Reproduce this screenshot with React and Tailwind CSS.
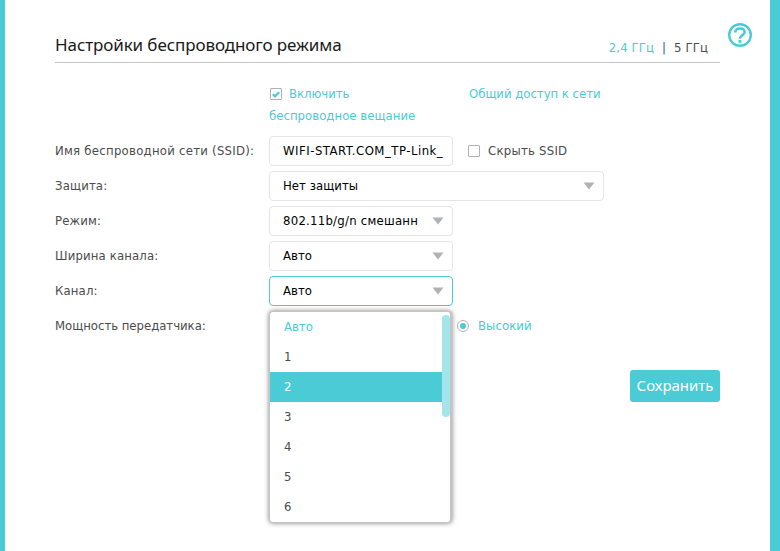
import React, { useState } from 'react';

const channels = ['Авто', '1', '2', '3', '4', '5', '6'];

const Arrow = () => (
  <svg width="12" height="8" viewBox="0 0 12 8" className="shrink-0">
    <path d="M0.5 0.5h11L6 7.5z" fill="#b0b2b5" />
  </svg>
);

const Checkbox = ({ checked }) => (
  <span className="flex h-3 w-3 shrink-0 items-center justify-center rounded-[1px] border border-[#b0b2b5] bg-white">
    {checked && (
      <svg width="8" height="7" viewBox="0 0 8 7">
        <path d="M0.8 3.2L3 5.4L7.2 1.2" fill="none" stroke="#4acbd6" strokeWidth="2.2" />
      </svg>
    )}
  </span>
);

const Select = ({ value, width = 'w-[184px]', active, onClick, tracking = 'tracking-[0.05px]' }) => (
  <button
    type="button"
    onClick={onClick}
    className={`flex h-[30px] ${width} items-center justify-between rounded-[4px] border bg-white pr-[8px] pl-[13px] text-black ${
      active ? 'border-[#4acbd6]' : 'border-[#e5e5e5]'
    }`}
  >
    <span className={`text-left whitespace-nowrap ${tracking}`}>{value}</span>
    <Arrow />
  </button>
);

const Row = ({ label, children, tracking = 'tracking-[0.15px]' }) => (
  <div className="mb-[5px] flex h-[30px] items-center">
    <div className={`w-[214px] shrink-0 whitespace-nowrap ${tracking}`}>{label}</div>
    {children}
  </div>
);

// Channel list that opens under its select
const ChannelMenu = ({ selected, hovered, onSelect }) => (
  <div className="absolute top-[35px] left-0 z-10 h-[212px] w-[183px] overflow-hidden rounded-[4px] border border-r-2 border-[#c4c4c4] bg-white shadow-[0_0_5px_rgba(0,0,0,0.5)]">
    <ul>
      {channels.map((item) => (
        <li
          key={item}
          onClick={() => onSelect(item)}
          className={`flex h-[30px] items-center pl-[14px] ${
            item === hovered
              ? 'bg-[#4acbd6] text-white'
              : item === selected
                ? 'text-[#4acbd6]'
                : ''
          }`}
        >
          {item}
        </li>
      ))}
    </ul>
    <div className="absolute top-[3px] right-0 h-[102px] w-[8px] rounded-full bg-[#a4e5eb]" />
  </div>
);

const App = () => {
  const [channel, setChannel] = useState('Авто');
  const [open, setOpen] = useState(true);

  return (
    <div className="h-[551px] w-[780px] overflow-hidden border-r-[10px] border-l-[5px] border-[#4acbd6] bg-white font-['DejaVu_Sans_Condensed','DejaVu_Sans',sans-serif] text-[13px] leading-[22px] tracking-[-0.02px] text-[#4c4c4c] [font-stretch:condensed]">
      <div className="flex pt-[22px] pl-[50px]">
        <main className="w-[665px]">
          {/* Header */}
          <header className="flex h-[41px] items-center justify-between border-b border-[#c6c6c6]">
            <h1 className="pt-[6px] font-['Noto_Sans',sans-serif] text-[17px] tracking-[-0.1px] text-[#1a1a1a] [font-stretch:normal]">
              Настройки беспроводного режима
            </h1>
            <div className="flex gap-[8px] pt-[11px] pr-[12px] tracking-[0.1px]">
              <span className="text-[#4acbd6]">2,4 ГГц</span>
              <span className="text-[#29589b]">|</span>
              <span>5 ГГц</span>
            </div>
          </header>

          {/* Wireless radio */}
          <div className="mt-[20px] mb-[10px] flex h-[43px] pl-[214px] text-[#4acbd6]">
            <label className="w-[200px]">
              <span className="flex items-center gap-[7px] pl-[1px]">
                <Checkbox checked />
                Включить
              </span>
              <span className="block tracking-[0.03px]">беспроводное вещание</span>
            </label>
            <span>Общий доступ к сети</span>
          </div>

          <Row label="Имя беспроводной сети (SSID):" tracking="tracking-[0.26px]">
            <div className="flex h-[30px] w-[184px] items-center rounded-[4px] border border-[#e5e5e5] px-[13px] text-black">
              <span className="tracking-[0.5px] whitespace-nowrap">WIFI-START.COM_TP-Link_</span>
            </div>
            <label className="ml-[15px] flex items-center gap-[8px] tracking-[0.25px]">
              <Checkbox />
              Скрыть SSID
            </label>
          </Row>
          <Row label="Защита:">
            <Select value="Нет защиты" width="w-[335px]" />
          </Row>
          <Row label="Режим:">
            <Select value="802.11b/g/n смешанн" tracking="tracking-[0.25px]" />
          </Row>
          <Row label="Ширина канала:">
            <Select value="Авто" />
          </Row>
          <Row label="Канал:">
            <div className="relative">
              <Select value={channel} active onClick={() => setOpen(!open)} />
              {open && <ChannelMenu selected={channel} hovered="2" onSelect={setChannel} />}
            </div>
          </Row>
          <Row label="Мощность передатчика:" tracking="tracking-[-0.02px]">
            <label className="ml-[188px] flex items-center gap-[9px] tracking-[0.08px] text-[#4acbd6]">
              <span className="flex h-3 w-3 items-center justify-center rounded-full border border-[#b0b2b5]">
                <span className="h-1.5 w-1.5 rounded-full bg-[#4acbd6]" />
              </span>
              Высокий
            </label>
          </Row>

          <div className="mt-[29px] flex justify-end">
            <button
              type="button"
              className="h-8 w-[90px] rounded-[3px] bg-[#4acbd6] pb-[2px] font-['Noto_Sans',sans-serif] text-[15px] text-white [font-stretch:normal]"
            >
              Сохранить
            </button>
          </div>
        </main>

        {/* Help */}
        <svg width="24" height="24" viewBox="0 0 24 24" className="mt-[1px] ml-[8px]" fill="none" stroke="#4acbd6">
          <circle cx="12" cy="12" r="10.8" strokeWidth="2.4" />
          <path d="M7.2 9.4c0-2.5 1.9-3.9 4.7-3.9s4.7 1.4 4.7 3.7c0 3-4.7 3-4.7 6.6" strokeWidth="2.6" />
          <path d="M11.9 17v2.8" strokeWidth="2.8" />
        </svg>
      </div>
    </div>
  );
};

export default App;
